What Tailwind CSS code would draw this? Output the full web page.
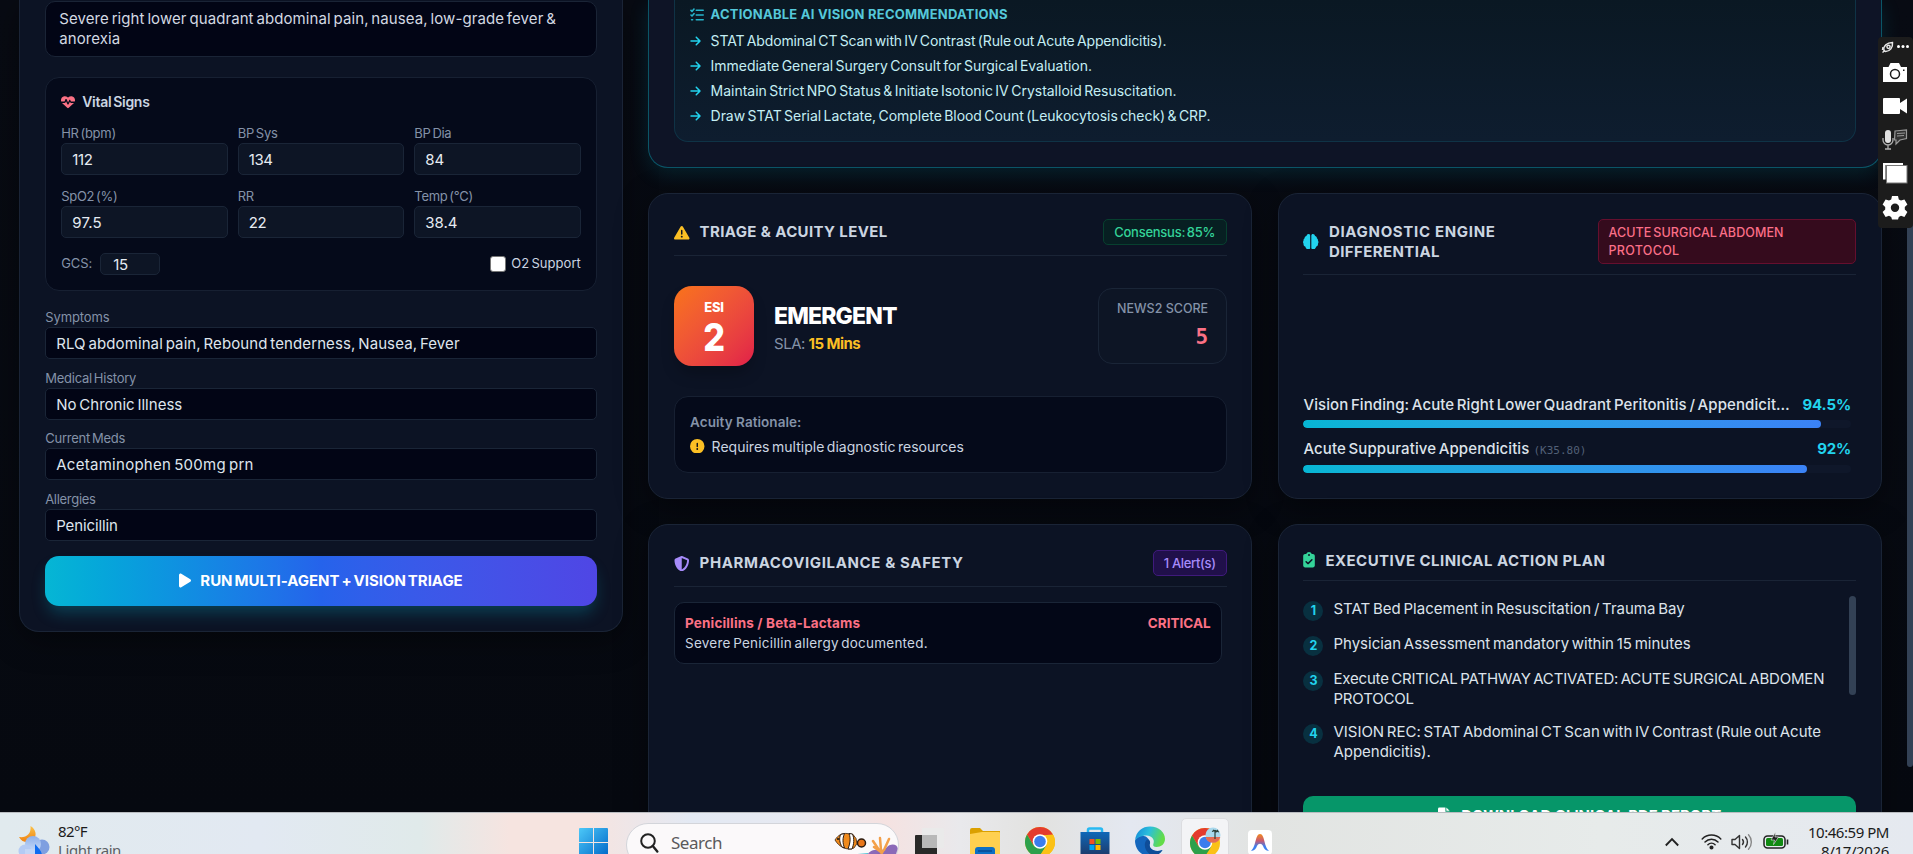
<!DOCTYPE html>
<html lang="en">
<head>
<meta charset="utf-8">
<title>Clinical Triage Dashboard</title>
<script src="https://cdn.jsdelivr.net/npm/@tailwindcss/browser@4"></script>
</head>
<body class="relative flex h-[854px] w-[1913px] flex-col overflow-hidden bg-[#070a12] font-['Inter',sans-serif] text-[#cbd5e1]">

<main class="relative flex h-[812px] shrink-0 items-start gap-[25.6px] overflow-hidden bg-linear-to-b from-[#080b13] to-[#060910] pl-[19.2px] pr-[31.4px] whitespace-nowrap">

  <!-- Intake form -->
  <section class="h-[632px] w-[603.7px] shrink-0 rounded-b-[20px] border border-t-0 border-[#1a2436] bg-[#0c1324] px-[25px] shadow-[0_8px_32px_rgba(0,0,0,0.4)] [word-spacing:-1.5px]">
    <div class="mt-px h-14 rounded-[10px] border border-[#1a2436] bg-[#020515] px-[13px] pt-[7px] text-[15px] leading-5 tracking-[0.09px] text-[#d3d9e2]">Severe right lower quadrant abdominal pain, nausea, low-grade fever &amp;<br>anorexia</div>

    <div class="mt-[19.5px] h-[214px] rounded-[14px] border border-[#172032] bg-[#050a1a] px-[15px] pt-[14px]">
      <div class="flex h-5 items-center gap-[7px] text-sm font-semibold tracking-[-0.27px] text-[#cbd5e1]">
        <svg class="h-[14px] w-[14px] fill-[#fb7185]" viewBox="0 0 512 512"><path d="M228.3 469.1L47.6 300.4c-4.2-3.9-8.2-8.1-11.9-12.4h87c22.6 0 43-13.6 51.7-34.5l10.5-25.2 49.3 109.5c3.8 8.5 12.1 14 21.4 14.1s17.8-5 22-13.3L320 253.7l1.7 3.4c9.5 19 28.9 31 50.1 31H476.3c-3.7 4.3-7.7 8.5-11.9 12.4L283.7 469.1c-7.5 7-17.4 10.9-27.7 10.9s-20.2-3.9-27.7-10.9zM503.7 240h-132c-3 0-5.8-1.7-7.2-4.4l-23.2-46.3c-4.1-8.1-12.4-13.3-21.5-13.3s-17.4 5.1-21.5 13.3l-41.4 82.8L205.9 158.2c-3.9-8.7-12.7-14.3-22.2-14.1s-18.1 5.9-21.8 14.8l-31.8 76.3c-1.2 3-4.2 4.9-7.4 4.9H8.7C3 225.2 0 208.2 0 190.9v-5.8c0-69.9 50.5-129.5 119.4-141C165 36.5 211.4 51.4 244 84l12 12 12-12c32.6-32.6 79-47.5 124.6-39.9C461.5 55.6 512 115.2 512 185.1v5.8c0 16.9-2.8 33.5-8.3 49.1z"/></svg>
        Vital Signs
      </div>
      <div class="mt-[13px] grid grid-cols-3 gap-x-[10px] gap-y-[13px] text-[13px] leading-4 tracking-[-0.29px] text-[#8492a8]">
        <div>HR (bpm)<div class="mt-[2px] h-8 rounded-[5px] border border-[#1a2537] bg-[#0d1525] px-[10px] text-[15px] leading-[31px] tracking-[-0.28px] text-[#e6ebf2]">112</div></div>
        <div>BP Sys<div class="mt-[2px] h-8 rounded-[5px] border border-[#1a2537] bg-[#0d1525] px-[10px] text-[15px] leading-[31px] tracking-[-0.4px] text-[#e6ebf2]">134</div></div>
        <div>BP Dia<div class="mt-[2px] h-8 rounded-[5px] border border-[#1a2537] bg-[#0d1525] px-[10px] text-[15px] leading-[31px] tracking-[-0.1px] text-[#e6ebf2]">84</div></div>
        <div>SpO2 (%)<div class="mt-[2px] h-8 rounded-[5px] border border-[#1a2537] bg-[#0d1525] px-[10px] text-[15px] leading-[31px] tracking-[0.2px] text-[#e6ebf2]">97.5</div></div>
        <div>RR<div class="mt-[2px] h-8 rounded-[5px] border border-[#1a2537] bg-[#0d1525] px-[10px] text-[15px] leading-[31px] tracking-[-0.3px] text-[#e6ebf2]">22</div></div>
        <div>Temp (°C)<div class="mt-[2px] h-8 rounded-[5px] border border-[#1a2537] bg-[#0d1525] px-[10px] text-[15px] leading-[31px] tracking-[-0.05px] text-[#e6ebf2]">38.4</div></div>
      </div>
      <div class="mt-[15px] flex h-[22px] items-center text-[13px] tracking-[-0.07px] text-[#8492a8]">
        GCS:
        <div class="ml-2 h-[22px] w-[60px] rounded-[5px] border border-[#1a2537] bg-[#0d1525] px-3 text-[15px] leading-[21px] tracking-[-0.28px] text-[#e6ebf2]">15</div>
        <div class="ml-auto h-4 w-4 rounded-[3px] border border-[#767676] bg-white"></div>
        <span class="ml-[5px] tracking-[0.04px] text-[#cbd5e1]">O2 Support</span>
      </div>
    </div>

    <div class="mt-[18.5px] text-[13px] leading-4 tracking-[-0.1px] text-[#8492a8]">Symptoms</div>
    <div class="mt-[2px] h-8 rounded-[5px] border border-[#1a2537] bg-[#020515] px-[10px] text-[15px] leading-[31px] tracking-[0.1px] text-[#dfe5ed]">RLQ abdominal pain, Rebound tenderness, Nausea, Fever</div>
    <div class="mt-[11px] text-[13px] leading-4 tracking-[-0.24px] text-[#8492a8]">Medical History</div>
    <div class="mt-[2px] h-8 rounded-[5px] border border-[#1a2537] bg-[#020515] px-[10px] text-[15px] leading-[31px] tracking-[0.02px] text-[#dfe5ed]">No Chronic Illness</div>
    <div class="mt-[10px] text-[13px] leading-4 tracking-[-0.24px] text-[#8492a8]">Current Meds</div>
    <div class="mt-[2px] h-8 rounded-[5px] border border-[#1a2537] bg-[#020515] px-[10px] text-[15px] leading-[31px] tracking-[0.28px] text-[#dfe5ed]">Acetaminophen 500mg prn</div>
    <div class="mt-[11px] text-[13px] leading-4 tracking-[-0.3px] text-[#8492a8]">Allergies</div>
    <div class="mt-[2px] h-8 rounded-[5px] border border-[#1a2537] bg-[#020515] px-[10px] text-[15px] leading-[31px] tracking-[-0.12px] text-[#dfe5ed]">Penicillin</div>

    <button class="mt-[15px] flex h-[50px] w-full items-center justify-center gap-[9px] rounded-[14px] bg-linear-to-r from-[#06b6d4] via-[#2563eb] to-[#4f46e5] text-[15px] font-bold tracking-[-0.03px] text-white shadow-[0_10px_16px_-3px_rgba(6,182,212,0.27)] [word-spacing:-1.5px]">
      <svg class="mb-px h-[15px] w-[12px] fill-white" viewBox="0 16 384 480"><path d="M73 39c-14.8-9.1-33.4-9.4-48.5-.9S0 62.6 0 80V432c0 17.4 9.4 33.4 24.5 41.9s33.7 8.1 48.5-.9L361 297c14.3-8.7 23-24.2 23-41s-8.7-32.2-23-41L73 39z"/></svg>
      RUN MULTI-AGENT + VISION TRIAGE
    </button>
  </section>

  <div class="flex min-w-0 flex-1 flex-col gap-[25.6px]">

    <!-- Vision findings -->
    <section class="h-[167.7px] shrink-0 rounded-b-[20px] border border-t-0 border-[#0b5567] bg-[#0e1426] px-[24.6px] shadow-[0_6px_20px_rgba(6,182,212,0.14)]">
      <div class="h-[141.7px] rounded-b-[14px] border border-t-0 border-[#0f3346] bg-linear-to-b from-[#0a1823] to-[#0e1d2f] px-[15px] pt-1 text-sm text-[#c4eef4]">
        <div class="flex h-[21px] items-center gap-[6.5px] text-[13px] font-bold tracking-[0.23px] text-[#55c8da]">
          <svg class="h-[14px] w-[14px] fill-none stroke-[#26b5cb]" viewBox="0 0 14 14" stroke-width="1.6" stroke-linecap="round" stroke-linejoin="round"><path d="M6.3 2.3H13.2M6.3 7H13.2M6.3 11.7H13.2M1 2.4l1 1L4 1M1 7l1 1L4 5.7M1.6 11.7h1"/></svg>
          ACTIONABLE AI VISION RECOMMENDATIONS
        </div>
        <ul class="mt-[3px] [word-spacing:-1.5px]">
          <li class="flex h-[25px] items-center gap-[9.5px] tracking-[-0.12px]"><svg class="h-[12px] w-[11px] fill-[#22d3ee]" viewBox="0 0 448 512"><path d="M438.6 278.6c12.5-12.5 12.5-32.8 0-45.3l-160-160c-12.5-12.5-32.8-12.5-45.3 0s-12.5 32.8 0 45.3L338.8 224 32 224c-17.7 0-32 14.3-32 32s14.3 32 32 32l306.7 0L233.4 393.4c-12.5 12.5-12.5 32.8 0 45.3s32.8 12.5 45.3 0l160-160z"/></svg>STAT Abdominal CT Scan with IV Contrast (Rule out Acute Appendicitis).</li>
          <li class="flex h-[25px] items-center gap-[9.5px] tracking-[-0.02px]"><svg class="h-[12px] w-[11px] fill-[#22d3ee]" viewBox="0 0 448 512"><path d="M438.6 278.6c12.5-12.5 12.5-32.8 0-45.3l-160-160c-12.5-12.5-32.8-12.5-45.3 0s-12.5 32.8 0 45.3L338.8 224 32 224c-17.7 0-32 14.3-32 32s14.3 32 32 32l306.7 0L233.4 393.4c-12.5 12.5-12.5 32.8 0 45.3s32.8 12.5 45.3 0l160-160z"/></svg>Immediate General Surgery Consult for Surgical Evaluation.</li>
          <li class="flex h-[25px] items-center gap-[9.5px] tracking-[-0.01px]"><svg class="h-[12px] w-[11px] fill-[#22d3ee]" viewBox="0 0 448 512"><path d="M438.6 278.6c12.5-12.5 12.5-32.8 0-45.3l-160-160c-12.5-12.5-32.8-12.5-45.3 0s-12.5 32.8 0 45.3L338.8 224 32 224c-17.7 0-32 14.3-32 32s14.3 32 32 32l306.7 0L233.4 393.4c-12.5 12.5-12.5 32.8 0 45.3s32.8 12.5 45.3 0l160-160z"/></svg>Maintain Strict NPO Status &amp; Initiate Isotonic IV Crystalloid Resuscitation.</li>
          <li class="flex h-[25px] items-center gap-[9.5px] tracking-[-0.04px]"><svg class="h-[12px] w-[11px] fill-[#22d3ee]" viewBox="0 0 448 512"><path d="M438.6 278.6c12.5-12.5 12.5-32.8 0-45.3l-160-160c-12.5-12.5-32.8-12.5-45.3 0s-12.5 32.8 0 45.3L338.8 224 32 224c-17.7 0-32 14.3-32 32s14.3 32 32 32l306.7 0L233.4 393.4c-12.5 12.5-12.5 32.8 0 45.3s32.8 12.5 45.3 0l160-160z"/></svg>Draw STAT Serial Lactate, Complete Blood Count (Leukocytosis check) &amp; CRP.</li>
        </ul>
      </div>
    </section>

    <div class="grid grid-cols-2 gap-[25.6px]">

      <!-- Triage -->
      <section class="h-[305.4px] rounded-[20px] border border-[#1a2436] bg-[#0c1324] px-[24.6px] pt-[24.6px] shadow-[0_8px_32px_rgba(0,0,0,0.4)]">
        <header class="flex h-[37px] items-start border-b border-[#1a2436]">
          <div class="flex h-[27px] items-center text-[15px] font-bold tracking-[0.38px]">
            <svg class="mr-[10px] h-[15.5px] w-[15.5px] fill-[#fbbf24]" viewBox="0 0 512 512"><path d="M256 32c14.2 0 27.3 7.5 34.5 19.8l216 368c7.3 12.4 7.3 27.7 .2 40.1S486.3 480 472 480H40c-14.3 0-27.6-7.7-34.7-20.1s-7-27.8 .2-40.1l216-368C228.7 39.5 241.8 32 256 32zm0 128c-13.3 0-24 10.7-24 24V296c0 13.3 10.7 24 24 24s24-10.7 24-24V184c0-13.3-10.7-24-24-24zm32 224a32 32 0 1 0 -64 0 32 32 0 1 0 64 0z"/></svg>
            TRIAGE &amp; ACUITY LEVEL
          </div>
          <span class="ml-auto h-[26px] rounded-[5px] border border-[#07402f] bg-[#071f22] px-[10.5px] text-[13px] font-medium leading-[25px] tracking-[-0.26px] text-[#34d399] [word-spacing:-1.5px]">Consensus: 85%</span>
        </header>
        <div class="mt-[30px] flex h-[80px] items-center">
          <div class="flex h-[80px] w-[80px] flex-col items-center rounded-[18px] bg-linear-to-br from-[#f97316] to-[#e11d48] pt-3 text-white shadow-[0_10px_15px_-3px_rgba(0,0,0,0.25)]">
            <span class="text-[13px] font-extrabold leading-[18px] tracking-[-0.24px]">ESI</span>
            <span class="text-[38px] font-extrabold leading-[42px]"><span class="inline-block scale-x-90">2</span></span>
          </div>
          <div class="ml-[20px] mt-[7px]">
            <div class="text-[23px] font-extrabold leading-7 tracking-[-0.87px] text-white">EMERGENT</div>
            <div class="mt-[2px] text-[15px] leading-6 tracking-[-0.5px] text-[#8492a8]">SLA: <span class="font-bold tracking-[-0.56px] text-[#fbbf24]">15 Mins</span></div>
          </div>
          <div class="ml-auto h-[76px] w-[129px] rounded-[14px] border border-[#1a2537] bg-[#0d1525] pr-[17.5px] pt-[10.5px] text-right">
            <div class="text-[12.5px] font-medium leading-5 text-[#8492a8]">NEWS2 SCORE</div>
            <div class="mt-[3px] font-['DejaVu_Sans_Mono',monospace] text-[21px] font-bold leading-[30px] text-[#fb7185]">5</div>
          </div>
        </div>
        <div class="mt-[30px] h-[77px] rounded-[14px] border border-[#172032] bg-[#050a1a] px-[15px] pt-[15px]">
          <div class="text-[13.5px] font-semibold leading-5 tracking-[0.05px] text-[#8492a8]">Acuity Rationale:</div>
          <div class="mt-[5px] flex h-5 items-center gap-[7px] text-sm tracking-[0.02px] [word-spacing:-1.5px]">
            <svg class="mb-[2px] h-[14.5px] w-[14.5px] fill-[#fbbf24]" viewBox="0 0 512 512"><path d="M256 512A256 256 0 1 0 256 0a256 256 0 1 0 0 512zm0-384c13.3 0 24 10.7 24 24V264c0 13.3-10.7 24-24 24s-24-10.7-24-24V152c0-13.3 10.7-24 24-24zM224 352a32 32 0 1 1 64 0 32 32 0 1 1 -64 0z"/></svg>
            Requires multiple diagnostic resources
          </div>
        </div>
      </section>

      <!-- Differential -->
      <section class="flex h-[305.4px] flex-col rounded-[20px] border border-[#1a2436] bg-[#0c1324] px-[24.6px] pt-[24.6px] pb-[25px] shadow-[0_8px_32px_rgba(0,0,0,0.4)]">
        <header class="flex h-[56px] shrink-0 items-start border-b border-[#1a2436]">
          <div class="mt-px flex h-[45px] items-center text-[15px] font-bold leading-5 tracking-[0.68px]">
            <svg class="mr-[10px] mb-[2px] h-[15.5px] w-[15.5px] fill-[#22d3ee]" viewBox="0 0 16 16"><path d="M5.8 0C4.600 0 3.700 .9 3.600 2C2.400 2.200 1.600 3.200 1.700 4.400C.8 4.900.4 5.800.6 6.800C-.1 7.500-.2 9.200.6 10C.3 11.300 1 12.600 2.300 13C2.700 14.600 3.800 16 5.400 16C6.600 16 7.400 15.200 7.400 14.100V1.700C7.400.7 6.700 0 5.800 0zM10.200 0C11.400 0 12.300 .9 12.400 2C13.600 2.200 14.400 3.200 14.300 4.400C15.200 4.900 15.600 5.800 15.400 6.800C16.100 7.500 16.200 9.200 15.400 10C15.700 11.300 15 12.600 13.700 13C13.300 14.600 12.200 16 10.600 16C9.400 16 8.600 15.200 8.600 14.100V1.700C8.600.7 9.300 0 10.200 0z"/></svg>
            <span>DIAGNOSTIC ENGINE<br><span class="tracking-[0.41px]">DIFFERENTIAL</span></span>
          </div>
          <span class="ml-auto h-[45px] w-[258px] rounded-[5px] border border-[#650f2e] bg-[#350b1d] px-[9.500px] pt-[4px] text-[12.5px] font-medium leading-[18px] tracking-[0.08px] text-[#fb6f88] [word-spacing:-1.5px]">ACUTE SURGICAL ABDOMEN<br><span class="tracking-[0.3px]">PROTOCOL</span></span>
        </header>
        <div class="mt-auto pr-[5px] text-[15px] font-medium text-[#dde3eb]">
          <div class="flex h-5 items-center justify-between pt-px"><span class="tracking-[0.09px] [word-spacing:-1.5px]">Vision Finding: Acute Right Lower Quadrant Peritonitis / Appendicit…</span><span class="font-bold tracking-[-0.12px] text-[#22d3ee]">94.5%</span></div>
          <div class="mt-[5.500px] h-[7.500px] overflow-hidden rounded-full bg-[#0f172a]"><div class="h-full rounded-full bg-linear-to-r from-[#06b6d4] to-[#3b82f6]" style="width:94.5%"></div></div>
          <div class="mt-[11px] flex h-5 items-center justify-between pt-px"><span><span class="tracking-[0.1px] [word-spacing:-1.5px]">Acute Suppurative Appendicitis</span> <span class="font-['DejaVu_Sans_Mono',monospace] text-[11px] font-normal text-[#526077]">(K35.80)</span></span><span class="font-bold tracking-[-0.2px] text-[#22d3ee]">92%</span></div>
          <div class="mt-[6px] h-[8px] overflow-hidden rounded-full bg-[#0f172a]"><div class="h-full rounded-full bg-linear-to-r from-[#06b6d4] to-[#3b82f6]" style="width:92%"></div></div>
        </div>
      </section>

      <!-- Pharmacovigilance -->
      <section class="h-[330px] rounded-[20px] border border-[#1a2436] bg-[#0c1324] px-[24.6px] pt-[24.6px] shadow-[0_8px_32px_rgba(0,0,0,0.4)]">
        <header class="flex h-[37px] items-start border-b border-[#1a2436]">
          <div class="flex h-[27px] items-center text-[15px] font-bold tracking-[0.63px]">
            <svg class="mr-[10px] h-[15.5px] w-[15.5px] fill-[#a78bfa]" viewBox="0 0 512 512"><path d="M256 0c4.600 0 9.200 1 13.400 2.900L457.700 82.800c22 9.300 38.400 31 38.300 57.200c-.5 99.200-41.300 280.700-213.600 363.200c-16.700 8-36.100 8-52.800 0C57.300 420.700 16.500 239.200 16 140c-.1-26.200 16.300-47.900 38.300-57.200L242.700 2.900C246.800 1 251.400 0 256 0zm0 66.800V444.800C394 378 431.100 230.100 432 141.400L256 66.800z"/></svg>
            PHARMACOVIGILANCE &amp; SAFETY
          </div>
          <span class="ml-auto h-[26px] rounded-[5px] border border-[#3f1a7c] bg-[#20104a] px-[10px] text-[13px] font-medium leading-[24px] tracking-[-0.33px] text-[#a78bfa]">1 Alert(s)</span>
        </header>
        <div class="mr-[5px] mt-[15px] h-[62px] rounded-[10px] border border-[#1a2537] bg-[#030717] px-[10px] pt-[10px] text-[13.500px] leading-5">
          <div class="flex justify-between font-bold text-[#fb7185]"><span class="tracking-[0.15px]">Penicillins / Beta-Lactams</span><span>CRITICAL</span></div>
          <div class="tracking-[0.23px] [word-spacing:-1.5px]">Severe Penicillin allergy documented.</div>
        </div>
      </section>

      <!-- Action plan -->
      <section class="h-[330px] rounded-[20px] border border-[#1a2436] bg-[#0c1324] px-[24.6px] pt-[24.6px] shadow-[0_8px_32px_rgba(0,0,0,0.4)]">
        <header class="flex h-[31px] items-start border-b border-[#1a2436]">
          <div class="flex h-[22px] items-center text-[15px] font-bold tracking-[0.46px]">
            <svg class="mr-[10px] mb-[2px] h-[15.500px] w-[12px] fill-[#34d399]" viewBox="0 0 384 512"><path d="M192 0c-41.800 0-77.400 26.700-90.500 64H64C28.700 64 0 92.700 0 128V448c0 35.300 28.700 64 64 64H320c35.300 0 64-28.700 64-64V128c0-35.300-28.700-64-64-64H282.500C269.400 26.700 233.800 0 192 0zm0 64a32 32 0 1 1 0 64 32 32 0 1 1 0-64zM305 273L177 401c-9.400 9.400-24.600 9.400-33.900 0L79 337c-9.400-9.400-9.400-24.600 0-33.900s24.600-9.400 33.900 0l47 47L271 239c9.400-9.400 24.600-9.400 33.900 0s9.400 24.600 0 33.900z"/></svg>
            EXECUTIVE CLINICAL ACTION PLAN
          </div>
        </header>
        <div class="mt-[15px] flex h-[172px] justify-between">
          <ol class="flex flex-col gap-[13px] pt-[3px] text-[15px] leading-5 tracking-[0.01px] text-[#dde3eb] [word-spacing:-1.5px]">
            <li class="flex items-start gap-[10px]"><span class="mt-[2px] h-5 w-5 rounded-full bg-[#083040] text-center text-[12.500px] font-bold leading-5 text-[#22d3ee]">1</span><span>STAT Bed Placement in Resuscitation / Trauma Bay</span></li>
            <li class="flex items-start gap-[10px]"><span class="mt-[2px] h-5 w-5 rounded-full bg-[#083040] text-center text-[12.500px] font-bold leading-5 text-[#22d3ee]">2</span><span class="tracking-[0px]">Physician Assessment mandatory within 15 minutes</span></li>
            <li class="flex items-start gap-[10px]"><span class="mt-[2px] h-5 w-5 rounded-full bg-[#083040] text-center text-[12.500px] font-bold leading-5 text-[#22d3ee]">3</span><span class="tracking-[-0.18px]">Execute CRITICAL PATHWAY ACTIVATED: ACUTE SURGICAL ABDOMEN<br>PROTOCOL</span></li>
            <li class="flex items-start gap-[10px]"><span class="mt-[2px] h-5 w-5 rounded-full bg-[#083040] text-center text-[12.500px] font-bold leading-5 text-[#22d3ee]">4</span><span class="tracking-[-0.01px]">VISION REC: STAT Abdominal CT Scan with IV Contrast (Rule out Acute<br>Appendicitis).</span></li>
          </ol>
          <div class="h-[99px] w-[7px] rounded-full bg-[#334155]"></div>
        </div>
        <button class="mt-[28px] flex h-[40px] w-full items-center justify-center gap-[10px] rounded-[10px] bg-[#069669] text-[15px] font-bold text-white">
          <svg class="mb-[2px] h-[16px] w-[13px] fill-white" viewBox="0 0 14 16"><path d="M1.500 0H8v4.500h4.500V14.500A1.500 1.500 0 0 1 11 16H1.500A1.500 1.500 0 0 1 0 14.500V1.500A1.500 1.500 0 0 1 1.500 0zM9 0l3.500 3.500H9z"/></svg>
          DOWNLOAD CLINICAL PDF REPORT
        </button>
      </section>
    </div>
  </div>

  <!-- Page scrollbar -->
  <div class="absolute right-0 top-[100px] h-[667px] w-[6px] rounded-full bg-[#334155]"></div>
</main>

<!-- Floating capture toolbar -->
<aside class="absolute right-0 top-[37px] flex h-[191px] w-[35px] flex-col items-center rounded-[4px] bg-[#1c1c1c]">
  <svg class="h-[191px] w-[35px]" viewBox="0 0 35 191" fill="#fff">
    <g fill="none" stroke="#e8e8e8" stroke-width="1.500"><path d="M6 13.500C5 9 9 5.500 14.500 5.500C15 10.500 12 14.500 7.500 14.500z"/><circle cx="10.500" cy="9.800" r="1.600"/><path d="M4.500 15.500l2.500-2M5 10l-.5 3"/></g>
    <circle cx="20.500" cy="9.500" r="1.500"/><circle cx="25" cy="9.500" r="1.500"/><circle cx="29.500" cy="9.500" r="1.500"/>
    <path d="M5 30h5.500l2-4h8.500l2 4H29v15H5z"/><circle cx="17" cy="37" r="4.500" fill="none" stroke="#1c1c1c" stroke-width="1.500"/><rect x="25" y="32.500" width="1.500" height="1.500" fill="#1c1c1c"/>
    <path d="M5 62a1 1 0 0 1 1-1h15a1 1 0 0 1 1 1v4l7-4.500v15L22 72v4a1 1 0 0 1-1 1H6a1 1 0 0 1-1-1z"/>
    <rect x="7" y="93" width="6" height="13" rx="3" fill="#e0e0e0"/><path d="M5 101v2a5 5 0 0 0 10 0v-2M10 108v4M7 112h6" fill="none" stroke="#b0b0b0" stroke-width="1.300"/>
    <path d="M17 94l11.500-1v8.500L22 103l-4 4v-4h-1.500z" fill="#333" stroke="#999" stroke-width="1.200"/><path d="M19 96.500l8-.5M19 99l7-.5" stroke="#999" stroke-width="1"/>
    <path d="M5 126h20v2H7.500v14.500H5z"/><rect x="8.500" y="128.500" width="20.500" height="17.500" stroke="#777" stroke-width="1"/>
    <path fill-rule="evenodd" d="M14 159h6l.8 3.400 2.200 1.200 3.400-1.200 3 5-2.600 2.600v2.400l2.600 2.600-3 5-3.400-1.200-2.200 1.200L20 182.500h-6l-.8-2.500-2.200-1.200L7.600 180l-3-5 2.600-2.600V170l-2.600-2.600 3-5L11 163.600l2.200-1.200zM17 166.500a4.200 4.200 0 1 0 0 8.400 4.200 4.200 0 0 0 0-8.400z"/>
  </svg>
</aside>

<!-- Taskbar -->
<footer class="relative flex h-[42px] shrink-0 items-start overflow-hidden border-t border-[#b9bcc0] bg-[linear-gradient(90deg,#e1eaee_0px,#e2e9f2_260px,#e0eaea_420px,#f6e4e0_510px,#f6e4e0_590px,#e3e9f3_690px,#e6e9f1_790px,#f5e2e1_885px,#e9e9ec_960px,#e2e2e0_1040px,#e4e8f1_1130px,#e2e4e2_1260px,#e7ebea_1600px,#e5e9f0_1913px)] font-['Noto_Sans',sans-serif] text-[#1b1b1b] whitespace-nowrap">
  <svg class="ml-[18px] mt-[12px] h-[30px] w-[32px] shrink-0" viewBox="0 0 32 30">
    <defs><linearGradient id="mo" x2="0" y2="1"><stop stop-color="#fbc34a"/><stop offset="1" stop-color="#f08010"/></linearGradient><linearGradient id="cl" x2="0" y2="1"><stop stop-color="#8fb0ea"/><stop offset="1" stop-color="#c9dcf8"/></linearGradient></defs>
    <path d="M12.500 1C18 4 19.500 11 15 15C11 18.500 4 18 1 12C8 13 13.500 9 12.500 1z" fill="url(#mo)"/>
    <circle cx="24" cy="22" r="7.500" fill="#7f9fe0"/><circle cx="15" cy="19" r="8" fill="url(#cl)"/><circle cx="7" cy="26" r="6.500" fill="#b4cbf4"/><rect x="7" y="24" width="14" height="8" fill="#c3d6f6"/><path d="M17 19c4 5 7 7 7 12h-7z" fill="#0f6cf0"/>
  </svg>
  <div class="ml-2 mt-[9px] w-[120px] text-[15px] leading-[19px]"><div class="tracking-[-0.59px]">82°F</div><div class="tracking-[-0.4px] text-[#5c5f63]">Light rain</div></div>
  <svg class="ml-[401px] mt-[15px] h-[29px] w-[29px] shrink-0" viewBox="0 0 29 29"><defs><linearGradient id="wn" x2="1" y2="1"><stop stop-color="#4cc8f8"/><stop offset="1" stop-color="#0067c8"/></linearGradient></defs><path fill="url(#wn)" d="M0 1a1 1 0 0 1 1-1h13v14H0zM15 0h13a1 1 0 0 1 1 1v13H15zM0 15h14v14H0zM15 15h14v14H15z"/></svg>
  <div class="relative ml-[18px] mt-[9.500px] flex h-[44px] w-[273px] shrink-0 items-start overflow-hidden rounded-[22px] border border-[#d3d5da] bg-[#fbf9fa] pl-[13px]">
    <svg class="mt-[9px] h-[20px] w-[19px] fill-none stroke-[#222]" viewBox="0 0 19 20" stroke-width="2"><circle cx="8" cy="8" r="6.800"/><path d="M12.800 13l4.500 5.500" stroke-width="2.400" stroke-linecap="round"/></svg>
    <span class="ml-[12px] mt-[6px] text-[17px] leading-[25px] tracking-[-0.47px] text-[#5a5a5c]">Search</span>
    <svg class="absolute left-[207px] top-0 h-[40px] w-[66px]" viewBox="0 0 66 40">
      <path d="M1 40C6 31 22 30 34 29V40z" fill="#4fc3d4"/>
      <path d="M1 16C4 11 8 9 13 9.500l6 1 3 4 1 5-3 4.500C13 27 5 23 1 16z" fill="#f08a1c" stroke="#3a2413" stroke-width=".8"/>
      <path d="M6.500 10.500c-1.500 4-1 8 1.500 12.500l2.500 1c-2-5-2-10 0-14.500zM15 9.500c2 5 1 10-1 15.500h4c2-5 2.500-10 .5-15z" fill="#fff" stroke="#2b1b10" stroke-width="1"/><circle cx="4" cy="15" r="1" fill="#111"/><circle cx="27.500" cy="19" r="4" fill="#e8761a" stroke="#2b1b10" stroke-width="1.500"/>
      <path d="M33 40C31 33 34 27 40 26c6-1 8 1 12-2 5-6 13-4 12 3s-3 10-8 13z" fill="#8b69b8"/>
      <path d="M39 17l6 9M46 14l1 12M55 15l-5 11M40 23l7 5M49 27l-5 8" stroke="#f3a04a" stroke-width="2.500" stroke-linecap="round"/>
      <path d="M37 37c2-7 8-9 13-6 4 2 7 5 6 10H38z" fill="#6f4fa6"/>
      <path d="M45 33c3-2 7-1 9 3l-2 5h-7z" fill="#e6603c"/>
    </svg>
  </div>
  <!-- Pinned applications -->
  <svg class="ml-[16px] mt-[14px] h-[28px] w-[30px] shrink-0" viewBox="0 0 30 28"><rect y="8" width="22" height="22" rx="1" fill="#292928"/><rect x="7" y="1" width="22" height="20" rx="1" fill="#eaeaea"/><path d="M7 8h15v13H8a1 1 0 0 1-1-1z" fill="#b8b8b8"/></svg>
  <svg class="ml-[25px] mt-[15px] h-[27px] w-[30px] shrink-0" viewBox="0 0 30 27"><path d="M0 2a2 2 0 0 1 2-2h8l3 3h17v5H0z" fill="#dba000"/><path d="M0 6l12-2h17a1 1 0 0 1 1 1v25H0z" fill="#ffd050"/><path d="M5 27v-5a3 3 0 0 1 3-3h14a3 3 0 0 1 3 3v5z" fill="#0d6fc4"/><path d="M8 23h14" stroke="#084a92" stroke-width="1.500"/></svg>
  <svg class="ml-[25px] mt-[13px] h-[29px] w-[30px] shrink-0" viewBox="0 0 30 29"><circle cx="15" cy="16" r="15" fill="#fbc116"/><path d="M2 8.500A15 15 0 0 1 28 8.500L15 9.500l-6.500 10z" fill="#e33b2e"/><path d="M2 8.500A15 15 0 0 0 14 31l7-11-12.500-.5z" fill="#2da04c"/><path d="M15 9h13.300A15 15 0 0 1 14 31l7.500-11z" fill="#fbc116"/><circle cx="15" cy="15.500" r="7.300" fill="#fff"/><circle cx="15" cy="15.500" r="5.800" fill="#3b7ded"/></svg>
  <svg class="ml-[25px] mt-[14px] h-[28px] w-[30px] shrink-0" viewBox="0 0 30 28"><defs><linearGradient id="st" x2="0" y2="1"><stop stop-color="#0f68b8"/><stop offset="1" stop-color="#1f3765"/></linearGradient></defs><path d="M8 7V3a1.500 1.500 0 0 1 1.500-1.500h11A1.500 1.500 0 0 1 22 3v4" fill="none" stroke="#28b9f2" stroke-width="2.500"/><path d="M0.500 5h29v25H.5z" fill="url(#st)"/><path d="M9.500 12h5v5h-5z" fill="#f25022"/><path d="M15.500 12h5v5h-5z" fill="#7fba00"/><path d="M9.500 18h5v5h-5z" fill="#00a4ef"/><path d="M15.500 18h5v5h-5z" fill="#ffb900"/></svg>
  <svg class="ml-[25px] mt-[13px] h-[29px] w-[30px] shrink-0" viewBox="0 0 30 29"><defs><linearGradient id="ed" x2="1" y2=".3"><stop stop-color="#1385d8"/><stop offset=".5" stop-color="#2abfdc"/><stop offset="1" stop-color="#62dc48"/></linearGradient></defs><path d="M0 14.500C0 23 6 30 15 30.500c5 0 10-2.500 12.500-6.500-8 3-15-1-12.500-8C12 8 4 8 0 14.500z" fill="#1466bd"/><path d="M0 14.500C1 5 7.500 .5 15 .5c9 0 15 6 15 12.500 0 5-4 8-8.500 8-3 0-4-1.500-3-3.500 1.500-4-2-8-7-8-5.500 0-9.500 2.500-11.500 5z" fill="url(#ed)"/><path d="M12 13.500c-5 5-1 15 7 16.500 3-.5 6.500-2.500 8.500-6-8 3-14.500-2-12.500-6.500.5-2.500-1-4.500-3-4z" fill="#0f4d98"/></svg>
  <div class="ml-[16px] mt-[5px] h-[44px] w-[48px] shrink-0 rounded-[5px] border border-[#dcdde0] bg-[#f3f4f6] pl-[8px] pt-[8px]">
    <svg class="h-[29px] w-[31px]" viewBox="0 0 31 29"><circle cx="15" cy="16" r="15" fill="#fbc116"/><path d="M2 8.500A15 15 0 0 1 28 8.500L15 9.500l-6.500 10z" fill="#e33b2e"/><path d="M2 8.500A15 15 0 0 0 14 31l7-11-12.500-.5z" fill="#2da04c"/><circle cx="15" cy="15.500" r="7.300" fill="#fff"/><circle cx="15" cy="15.500" r="5.800" fill="#3b7ded"/><circle cx="23" cy="8" r="7.500" fill="#a8d8ec"/><path d="M15.700 10h14.600a7.500 7.500 0 0 1-14.600 0z" fill="#e56b52"/><path d="M25 4v8M22 4.500l3-1 4 1.500M23 3l3 2 2-2" stroke="#2b4038" stroke-width="1.200" fill="none"/></svg>
  </div>
  <svg class="ml-[19px] mt-[17px] h-[25px] w-[24px] shrink-0" viewBox="0 0 24 25"><defs><linearGradient id="ag" x2="0" y2="1"><stop stop-color="#f28a1e"/><stop offset=".4" stop-color="#c85a70"/><stop offset=".75" stop-color="#3c80f0"/></linearGradient></defs><rect width="24" height="25" rx="4" fill="#fff"/><path d="M3 20.500C8 18 7 4 12 4s4 14 9 16.500c-3 1-5-2-6-4.500-1.500-3-4.500-3-6 0-1 2.500-3 5.500-6 4.500z" fill="url(#ag)"/></svg>
  <!-- System tray -->
  <svg class="ml-auto mt-[24px] h-[10px] w-[14px] shrink-0 fill-none stroke-[#222]" viewBox="0 0 14 10" stroke-width="1.900"><path d="M.8 8.500L7 2.200l6.200 6.300"/></svg>
  <svg class="ml-[22px] mt-[20px] h-[17px] w-[21px] shrink-0 fill-none stroke-[#222]" viewBox="0 0 21 17" stroke-width="1.500" stroke-linecap="round"><path d="M1.200 6a13 13 0 0 1 18.600 0M4 9a9 9 0 0 1 13 0M6.900 11.800a5.200 5.200 0 0 1 7.200 0"/><circle cx="10.500" cy="14.500" r="1.300" fill="#222"/></svg>
  <svg class="ml-[9px] mt-[20px] h-[18px] w-[22px] shrink-0 fill-none stroke-[#333]" viewBox="0 0 22 18" stroke-width="1.400" stroke-linecap="round" stroke-linejoin="round"><path d="M1 6.500h3L8.500 2.500v13L4 11.500H1zM11.500 6.500a4 4 0 0 1 0 5M14.500 4a7.500 7.500 0 0 1 0 10"/><path d="M17.500 1.800a10.500 10.500 0 0 1 0 14.400" stroke="#888"/></svg>
  <svg class="ml-[10px] mt-[19px] h-[18px] w-[26px] shrink-0" viewBox="0 0 26 18"><rect x="1" y="4" width="21" height="12" rx="3.500" fill="none" stroke="#222" stroke-width="1.500"/><rect x="3" y="6" width="17" height="8" rx="1.500" fill="#118a12"/><path d="M24.500 7.500v5" stroke="#222" stroke-width="1.600"/><path d="M12.500 0L8 8h3.500l-1 4.500L15.500 5H12z" fill="#222" stroke="#e8ecea" stroke-width=".6"/></svg>
  <div class="ml-[19px] mr-[24px] mt-[9.500px] w-[81.500px] text-right text-[15px] leading-[19px]"><div class="tracking-[-0.46px]">10:46:59 PM</div><div class="tracking-[-0.36px]">8/17/2026</div></div>
</footer>
</body>
</html>
